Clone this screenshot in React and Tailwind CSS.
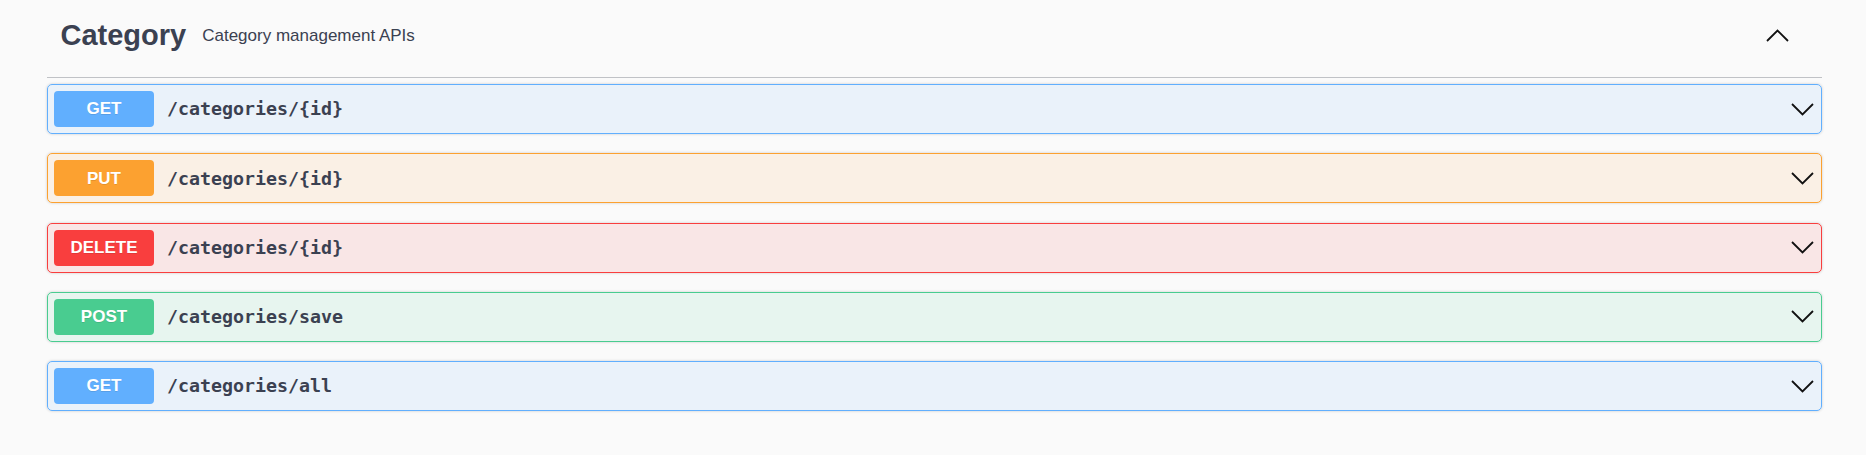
import React from "react";

const ops = [
  { method: "GET", path: "/categories/{id}", border: "border-[#61affe]", bg: "bg-[#61affe]/10", badge: "bg-[#61affe]" },
  { method: "PUT", path: "/categories/{id}", border: "border-[#fca130]", bg: "bg-[#fca130]/10", badge: "bg-[#fca130]" },
  { method: "DELETE", path: "/categories/{id}", border: "border-[#f93e3e]", bg: "bg-[#f93e3e]/10", badge: "bg-[#f93e3e]" },
  { method: "POST", path: "/categories/save", border: "border-[#49cc90]", bg: "bg-[#49cc90]/10", badge: "bg-[#49cc90]" },
  { method: "GET", path: "/categories/all", border: "border-[#61affe]", bg: "bg-[#61affe]/10", badge: "bg-[#61affe]" },
];

const Chevron = ({ up }) => (
  <svg width="23" height="13" viewBox="0 0 23 13" fill="none">
    <path
      d={up ? "M1 12 L11.5 1.5 L22 12" : "M1 1 L11.5 11.5 L22 1"}
      stroke="#111"
      strokeWidth="1.8"
    />
  </svg>
);

const OpBlock = ({ op }) => (
  <div
    className={`flex h-[50px] items-center rounded-[5px] border px-[6px] shadow-[0_0_3px_rgba(0,0,0,0.19)] ${op.border} ${op.bg}`}
  >
    <div
      className={`flex h-[36px] w-[100px] items-center justify-center rounded-[4px] text-[17px] font-bold text-white [text-shadow:0_1px_0_rgba(0,0,0,0.1)] ${op.badge}`}
      style={{ fontFamily: '"Liberation Sans", Arial, sans-serif' }}
    >
      {op.method}
    </div>
    <span
      className="ml-[13px] flex-1 text-[18.3px] font-semibold text-[#3b4151]"
      style={{ fontFamily: '"DejaVu Sans Mono", monospace' }}
    >
      {op.path}
    </span>
    <div className="mr-[1px] flex items-center">
      <Chevron />
    </div>
  </div>
);

export default function App() {
  return (
    <div
      className="min-h-[455px] bg-[#fafafa] text-[#3b4151]"
      style={{ fontFamily: '"Liberation Sans", Arial, sans-serif' }}
    >
      <div className="ml-[47px] mr-[44px]">
        {/* Tag header */}
        <div className="flex h-[78px] items-center border-b border-[#3b4151]/30 pb-[6px] pl-[13.5px]">
          <h3 className="text-[29px] font-bold">Category</h3>
          <small className="ml-[16px] text-[17px]">Category management APIs</small>
          <div className="ml-auto mr-[33px] flex items-center">
            <Chevron up />
          </div>
        </div>

        {/* Operations */}
        <div className="mt-[6px] flex flex-col gap-[19.25px]">
          {ops.map((op, i) => (
            <OpBlock key={i} op={op} />
          ))}
        </div>
      </div>
    </div>
  );
}
